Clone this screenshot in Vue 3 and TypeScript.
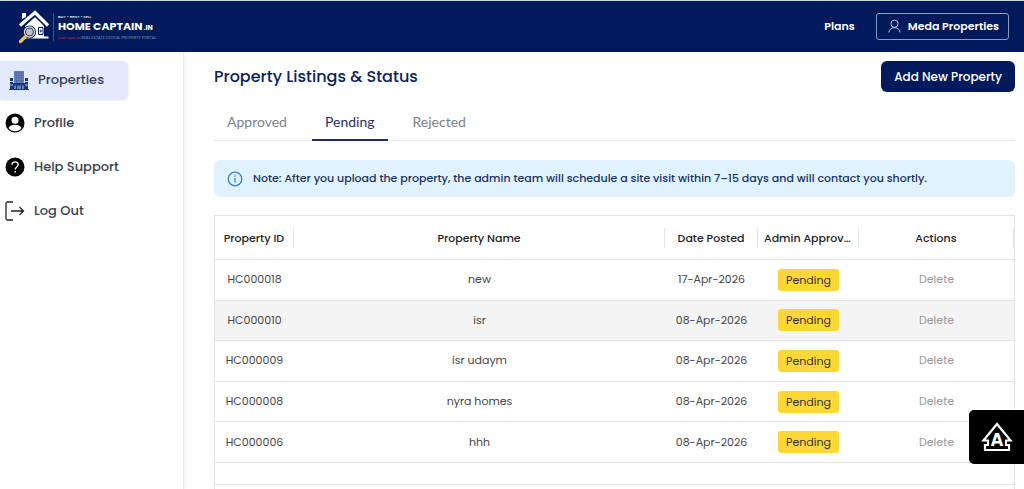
<script setup lang="ts">
import { ref } from 'vue'

interface Listing {
  id: string
  name: string
  posted: string
}

const tabs: string[] = ['Approved', 'Pending', 'Rejected']
const activeTab = ref('Pending')

const listings: Listing[] = [
  { id: 'HC000018', name: 'new', posted: '17-Apr-2026' },
  { id: 'HC000010', name: 'isr', posted: '08-Apr-2026' },
  { id: 'HC000009', name: 'isr udaym', posted: '08-Apr-2026' },
  { id: 'HC000008', name: 'nyra homes', posted: '08-Apr-2026' },
  { id: 'HC000006', name: 'hhh', posted: '08-Apr-2026' },
]
const highlighted = 'HC000010'
</script>

<template>
  <div class="page">
    <header class="topbar">
      <a class="brand" href="#" aria-label="Home Captain">
        <svg class="brand-mark" viewBox="0 0 32 34" aria-hidden="true">
          <path d="M4 9V3h4v4z" fill="#fff" />
          <path d="M7 16 17 7l9 9v12H7z" fill="#fff" />
          <path d="M2 15.500 17 2.500l13 13" fill="none" stroke="#fff" stroke-width="3.200" />
          <path d="M5.500 16.500 17 6.500l10.500 9.500" fill="none" stroke="#001a5c" stroke-width=".8" />
          <path d="M6 27.500h24.500" stroke="#fff" stroke-width="2" />
          <path d="M20.500 17.500h4.500v7h-4.500z" fill="#fff" stroke="#001a5c" />
          <path d="M22.800 19.500v3M21.500 21h2.500" stroke="#001a5c" stroke-width=".8" />
          <circle cx="11.500" cy="22" r="5" fill="#b9c4d6" stroke="#001a5c" stroke-width="3.200" />
          <circle cx="11.500" cy="22" r="5" fill="none" stroke="#ead9a8" stroke-width="1.400" />
          <path d="m7 27-4.500 4.500" stroke="#e8c25c" stroke-width="3.200" stroke-linecap="round" />
        </svg>
        <span class="brand-text">
          <span class="brand-over">BUY • RENT • SELL</span>
          <span class="brand-name">HOME CAPTAIN<small>.IN</small></span>
          <span class="brand-under"><b>CAPTAIN IN</b> REAL ESTATE DIGITAL PROPERTY PORTAL</span>
        </span>
      </a>
      <nav class="top-actions">
        <a class="plans" href="#">Plans</a>
        <button class="account" type="button">
          <svg viewBox="0 0 14 16" aria-hidden="true">
            <circle cx="7" cy="5" r="3.900" />
            <path d="M1 14.500c0-7 12-7 12 0" />
          </svg>
          Meda Properties
        </button>
      </nav>
    </header>

    <div class="body">
      <nav class="sidebar">
        <a class="item active" href="#">
          <svg class="icon" viewBox="0 0 20 20" aria-hidden="true">
            <path d="M5 1h10v12H5z" fill="#6a80b8" />
            <path d="M5 3h10M5 5.500h10M5 8h10M5 10.500h10M7.500 1v12M10 1v12M12.500 1v12" stroke="#4a65a3" stroke-width=".7" />
            <path d="M1 8h3v11H1zM16 8h3v11h-3zM4 13h12v6H4z" fill="#173a7c" />
            <path d="M1 11.500h3M1 15h3M16 11.500h3M16 15h3M6 19v-3.500M9 19v-3.500M11 19v-3.500M14 19v-3.500" stroke="#b8c5e8" />
            <path d="M0 19.500h20" stroke="#173a7c" />
          </svg>
          Properties
        </a>
        <a class="item" href="#">
          <svg class="icon" viewBox="0 0 20 20" aria-hidden="true">
            <circle cx="10" cy="10" r="9.500" />
            <circle cx="10" cy="7.300" r="3.500" fill="#fff" />
            <path d="M3.500 15c2-4.300 11-4.300 13 0-3 4.300-10 4.300-13 0z" fill="#fff" />
          </svg>
          Profile
        </a>
        <a class="item" href="#">
          <svg class="icon" viewBox="0 0 20 20" aria-hidden="true">
            <circle cx="10" cy="10" r="9.500" />
            <path d="M7 7.800c0-4 6.200-3.800 6.200-.3 0 2.400-3 2.400-3 5" fill="none" stroke="#fff" stroke-width="1.300" />
            <circle cx="10.200" cy="14.800" r=".9" fill="#fff" />
          </svg>
          Help Support
        </a>
        <a class="item" href="#">
          <svg class="icon line" viewBox="0 0 20 20" aria-hidden="true">
            <path d="M8 1H2.500Q1 1 1 2.500v15Q1 19 2.500 19H8M6 10h12.500M14.500 6l4 4-4 4" />
          </svg>
          Log Out
        </a>
      </nav>

      <main class="content">
        <div class="heading">
          <h1>Property Listings &amp; Status</h1>
          <button class="add" type="button">Add New Property</button>
        </div>

        <div class="tabs" role="tablist">
          <button
            v-for="tab in tabs"
            :key="tab"
            type="button"
            role="tab"
            class="tab"
            :class="{ selected: tab === activeTab }"
            :aria-selected="tab === activeTab"
            @click="activeTab = tab"
          >
            {{ tab }}
          </button>
        </div>

        <p class="note">
          <svg viewBox="0 0 16 16" aria-hidden="true">
            <circle cx="8" cy="8" r="6.800" />
            <path d="M8 7v4.500M8 4.300v1.400" />
          </svg>
          <span>Note: After you upload the property, the admin team will schedule a site visit within 7–15 days and will contact you shortly.</span>
        </p>

        <section class="card">
          <table>
            <colgroup>
              <col class="c-id" />
              <col />
              <col class="c-date" />
              <col class="c-status" />
              <col class="c-actions" />
            </colgroup>
            <thead>
              <tr>
                <th><div>Property ID</div></th>
                <th><div>Property Name</div></th>
                <th><div>Date Posted</div></th>
                <th><div>Admin Approval</div></th>
                <th><div>Actions</div></th>
              </tr>
            </thead>
            <tbody>
              <tr v-for="row in listings" :key="row.id" :class="{ hovered: row.id === highlighted }">
                <td>{{ row.id }}</td>
                <td>{{ row.name }}</td>
                <td>{{ row.posted }}</td>
                <td><span class="badge">Pending</span></td>
                <td><button class="delete" type="button">Delete</button></td>
              </tr>
            </tbody>
          </table>
          <div class="table-foot"></div>
        </section>
      </main>
    </div>

    <button class="widget" type="button" aria-label="Accessibility">
      <svg viewBox="0 0 32 32" aria-hidden="true">
        <path d="M16 3 2.500 19.500H7V24H4v5h24v-5h-3v-4.500h4.500z" fill="none" stroke="#fff" stroke-width="2.200" />
        <text x="16" y="25" text-anchor="middle">A</text>
      </svg>
    </button>
  </div>
</template>

<style>
body {
  margin: 0;
  background: #fff;
}
</style>

<style scoped>
.page {
  display: flex;
  flex-direction: column;
  box-sizing: border-box;
  min-height: 100vh;
  font-family: Poppins, Inter, "Open Sans", sans-serif;
  color: #333;
}
button {
  font-family: inherit;
  cursor: pointer;
}
a {
  text-decoration: none;
}
.topbar {
  display: flex;
  align-items: center;
  justify-content: space-between;
  box-sizing: border-box;
  height: 52px;
  padding: 0 15px 0 18px;
  border-top: 1px solid #d5d9e4;
  background: #001a5c;
}
.brand {
  display: flex;
  align-items: center;
  color: #fff;
}
.brand-mark {
  width: 32px;
  height: 34px;
}
.brand-text {
  display: flex;
  flex-direction: column;
  justify-content: center;
  height: 28px;
  margin-left: 3px;
  padding-left: 4px;
  border-left: 1px solid #42558a;
  white-space: nowrap;
}
.brand-over {
  font-size: 4px;
  line-height: 5px;
  font-weight: 500;
}
.brand-name {
  font-size: 11px;
  line-height: 14px;
  font-weight: 700;
}
.brand-name small {
  margin-left: 1px;
  font-size: 7px;
}
.brand-under {
  font-size: 4px;
  line-height: 5px;
  color: #8e97a8;
}
.brand-under b {
  color: #c0264a;
  font-weight: 500;
}
.top-actions {
  display: flex;
  align-items: center;
  gap: 21px;
}
.plans,
.account {
  color: #fff;
  font-size: 11px;
  font-weight: 600;
}
.account {
  display: flex;
  align-items: center;
  gap: 7px;
  height: 27px;
  padding: 0 9px 0 11px;
  border: 1px solid #8f9cc0;
  border-radius: 3px;
  background: transparent;
}
.account svg {
  width: 13px;
  height: 15px;
  fill: none;
  stroke: #cdd5e8;
}
.body {
  display: flex;
  flex: 1;
}
.sidebar {
  display: flex;
  flex-direction: column;
  gap: 4px;
  flex: none;
  box-sizing: border-box;
  width: 184px;
  padding-top: 9px;
  border-right: 1px solid #e9eaf0;
  box-shadow: 2px 0 5px #0000000d;
}
.item {
  display: flex;
  align-items: center;
  gap: 9px;
  height: 40px;
  padding-left: 5px;
  color: #374151;
  font-size: 13px;
  font-weight: 500;
}
.item.active {
  box-sizing: border-box;
  width: 128px;
  height: 38px;
  padding-left: 9px;
  border-radius: 0 6px 6px 0;
  background: #e3e9fd;
  box-shadow: 0 1px 3px #00000024;
}
.icon {
  width: 20px;
  height: 20px;
}
.icon.line {
  fill: none;
  stroke: #222;
  stroke-width: 1.3;
}
.content {
  display: flex;
  flex-direction: column;
  flex: 1;
  min-width: 0;
  padding: 9px 9px 0 30px;
}
.heading {
  display: flex;
  align-items: center;
  justify-content: space-between;
}
h1 {
  margin: 0;
  color: #0b2359;
  font-size: 16px;
  line-height: 24px;
  font-weight: 500;
}
.add {
  height: 31px;
  padding: 0 13px;
  border: 0;
  border-radius: 6px;
  background: #001a5c;
  color: #fff;
  font-size: 12px;
  font-weight: 500;
}
.tabs {
  display: flex;
  gap: 12px;
  margin-top: 12px;
  border-bottom: 1px solid #e6e6e6;
}
.tab {
  height: 37px;
  margin-bottom: -1px;
  padding: 0 13px;
  border: 0;
  border-bottom: 2px solid transparent;
  background: transparent;
  color: #7b818b;
  font-family: Lato, sans-serif;
  font-size: 14px;
}
.tab.selected {
  border-bottom-color: #1f2d6b;
  color: #1f2f66;
}
.note {
  display: flex;
  align-items: center;
  gap: 10px;
  box-sizing: border-box;
  min-height: 37px;
  margin: 19px 0 18px;
  padding: 0 13px;
  border-radius: 6px;
  background: #dff2fd;
  color: #17335f;
  font-size: 11px;
  font-weight: 500;
}
.note svg {
  flex: none;
  width: 16px;
  height: 16px;
  fill: none;
  stroke: #2e86c4;
  stroke-width: 1.3;
}
.card {
  flex: 1;
  border: solid #e4e4e4;
  border-width: 1px 1px 0;
}
table {
  width: 100%;
  height: 247px;
  table-layout: fixed;
  border-collapse: separate;
  border-spacing: 0;
  font-size: 11px;
}
.c-id {
  width: 79px;
}
.c-date {
  width: 93px;
}
.c-status {
  width: 101px;
}
.c-actions {
  width: 155px;
}
th,
td {
  padding: 0;
  border-bottom: 1px solid #e4e4e4;
  text-align: center;
}
th {
  height: 43px;
  font-weight: 500;
  color: #222;
}
th div {
  overflow: hidden;
  padding: 0 6px;
  border-right: 1px solid #e4e4e4;
  line-height: 20px;
  text-overflow: ellipsis;
  white-space: nowrap;
}
td {
  color: #444;
}
.hovered td {
  background: #f4f4f4;
}
.badge {
  display: inline-block;
  padding: 0 8px;
  border-radius: 3px;
  background: #fdd835;
  color: #333;
  line-height: 22px;
}
.delete {
  padding: 0;
  border: 0;
  background: transparent;
  color: #999;
  font-size: 11px;
}
.table-foot {
  height: 21px;
  border-bottom: 1px solid #e4e4e4;
}
.widget {
  position: fixed;
  right: 0;
  bottom: 25px;
  display: grid;
  place-items: center;
  width: 55px;
  height: 54px;
  padding: 0;
  border: 0;
  border-radius: 5px 0 0 5px;
  background: #000;
}
.widget svg {
  width: 32px;
  height: 32px;
}
.widget text {
  fill: #fff;
  font-family: "DejaVu Sans Condensed", Roboto, sans-serif;
  font-size: 18px;
  font-weight: 700;
}
</style>
